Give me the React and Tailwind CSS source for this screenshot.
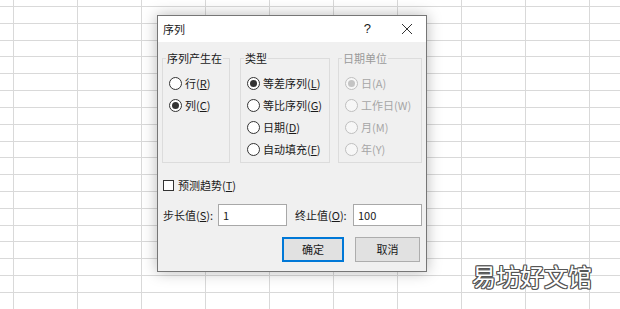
import React from "react";

const F = { fontFamily: '"Noto Sans CJK SC", "Noto Sans", sans-serif' };

function Radio({ checked, disabled, children }) {
  return (
    <div className="flex items-center h-[22px] gap-[3px]">
      <span
        className={
          "w-[13px] h-[13px] rounded-full border flex items-center justify-center shrink-0 " +
          (disabled ? "border-[#bfbfbf] bg-[#f7f7f7]" : "border-[#333333] bg-white")
        }
      >
        {checked && (
          <span className={"w-[7px] h-[7px] rounded-full " + (disabled ? "bg-[#c4c4c4]" : "bg-[#333333]")} />
        )}
      </span>
      <span className={"text-[11px] leading-[16px] whitespace-nowrap " + (disabled ? "text-[#a6a6a6]" : "text-[#1a1a1a]")}>
        {children}
      </span>
    </div>
  );
}

function Group({ title, width, disabled, children }) {
  return (
    <fieldset
      className={"border border-[#dcdcdc] h-[113px] min-w-0 px-0 pt-[6px] shrink-0 " + width}
    >
      <legend className={"ml-[3px] px-[1px] text-[11px] leading-[16px] whitespace-nowrap " + (disabled ? "text-[#9a9a9a]" : "text-[#1a1a1a]")}>
        {title}
      </legend>
      <div className="flex flex-col pl-[6px]">{children}</div>
    </fieldset>
  );
}

export default function App() {
  const cols = Array.from({ length: 11 });
  const rows = Array.from({ length: 19 });
  return (
    <div className="relative w-[620px] h-[309px] overflow-hidden bg-white" style={F}>
      {/* spreadsheet grid */}
      <div className="flex flex-col">
        {rows.map((_, r) => (
          <div key={r} className={"flex border-b border-[#d9d9d9] " + (r === 0 ? "h-[7px]" : "h-[16.82px]")}>
            {cols.map((_, c) => (
              <div
                key={c}
                className={"border-r border-[#d9d9d9] h-full shrink-0 " + (c === 0 ? "w-[14px]" : "w-[64px]")}
              />
            ))}
          </div>
        ))}
      </div>

      {/* dialog */}
      <div className="absolute left-[157px] top-[15px] w-[270px] h-[257px] border border-[#767676] flex flex-col shadow-[0_0_14px_rgba(0,0,0,0.28)]">
        <div className="h-[26px] bg-white flex items-center pl-[5px] pr-[12px] shrink-0">
          <span className="text-[11px] leading-[16px] text-[#1a1a1a]">序列</span>
          <span className="ml-auto text-[13px] text-[#1a1a1a] mr-[30px]" style={{ fontFamily: '"Liberation Sans", sans-serif' }}>?</span>
          <svg width="12" height="12" viewBox="0 0 12 12" className="mr-[1px]">
            <path d="M1 1 L11 11 M11 1 L1 11" stroke="#333" strokeWidth="1" />
          </svg>
        </div>
        <div className="flex-1 bg-[#f0f0f0] flex flex-col">
          <div className="flex pl-[4px] mt-[8px]">
            <Group title="序列产生在" width="w-[68px]">
              <Radio>行(<u>R</u>)</Radio>
              <Radio checked>列(<u>C</u>)</Radio>
            </Group>
            <div className="w-[10px] shrink-0" />
            <Group title="类型" width="w-[90px]">
              <Radio checked>等差序列(<u>L</u>)</Radio>
              <Radio>等比序列(<u>G</u>)</Radio>
              <Radio>日期(<u>D</u>)</Radio>
              <Radio>自动填充(<u>F</u>)</Radio>
            </Group>
            <div className="w-[8px] shrink-0" />
            <Group title="日期单位" width="w-[84px]" disabled>
              <Radio checked disabled>日(A)</Radio>
              <Radio disabled>工作日(W)</Radio>
              <Radio disabled>月(M)</Radio>
              <Radio disabled>年(Y)</Radio>
            </Group>
          </div>

          <div className="flex items-center h-[16px] mt-[14px] pl-[5px] gap-[4px]">
            <span className="w-[11px] h-[11px] border border-[#333333] bg-white shrink-0" />
            <span className="text-[11px] leading-[16px] text-[#1a1a1a]">预测趋势(<u>T</u>)</span>
          </div>

          <div className="flex items-center mt-[11px] pl-[5px] h-[22px]">
            <span className="text-[11px] leading-[16px] text-[#1a1a1a] w-[55px] shrink-0">步长值(<u>S</u>):</span>
            <div className="w-[69px] h-[22px] border border-[#a8a8a8] bg-white flex items-center pl-[4px] text-[11px] text-[#1a1a1a] shrink-0">1</div>
            <span className="text-[11px] leading-[16px] text-[#1a1a1a] ml-[8px] w-[58px] shrink-0">终止值(<u>O</u>):</span>
            <div className="w-[69px] h-[22px] border border-[#a8a8a8] bg-white flex items-center pl-[4px] text-[11px] text-[#1a1a1a] shrink-0">100</div>
          </div>

          <div className="flex mt-[11px] pl-[124px] gap-[11px]">
            <div className="w-[62px] h-[25px] border-2 border-[#0078d7] bg-[#e1e1e1] flex items-center justify-center text-[11px] text-[#1a1a1a]">确定</div>
            <div className="w-[65px] h-[25px] border border-[#adadad] bg-[#e1e1e1] flex items-center justify-center text-[11px] text-[#1a1a1a]">取消</div>
          </div>
        </div>
      </div>

      {/* watermark */}
      <div
        className="absolute left-[472px] top-[261px] text-[24px] leading-[30px] text-white tracking-[0px]"
        style={{ textShadow: "1px 0 #555, -1px 0 #555, 0 1px #555, 0 -1px #555, 1px 1px #555, -1px -1px #555, 1px -1px #555, -1px 1px #555" }}
      >
        易坊好文馆
      </div>
    </div>
  );
}
